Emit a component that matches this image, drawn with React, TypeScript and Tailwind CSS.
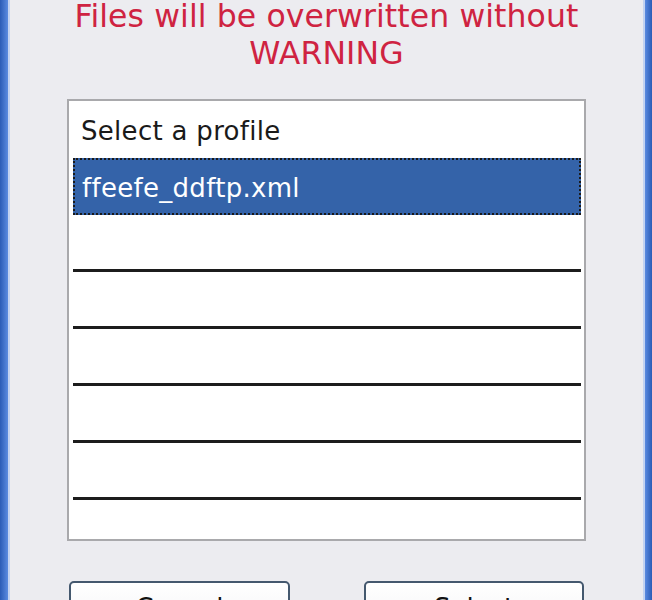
import React from "react";

export default function App() {
  const font = { fontFamily: '"DejaVu Sans", Verdana, sans-serif' };
  return (
    <div
      className="w-[652px] h-[600px] overflow-hidden flex bg-[#ececf0]"
      style={font}
    >
      {/* left window frame */}
      <div className="w-[8px] h-full shrink-0 bg-gradient-to-r from-[#2a5bb6] to-[#5b8be0]" />
      <div className="w-[2px] h-full shrink-0 bg-[#c3d3f1]" />

      {/* client area */}
      <div className="flex-1 flex flex-col items-center">
        <div className="shrink-0 mt-[-2px] text-center text-[31.5px] leading-[37px] text-[#cf2341] tracking-[0.1px]">
          <div>Files will be overwritten without</div>
          <div>WARNING</div>
        </div>

        <div className="shrink-0 mt-[27px] w-[519px] h-[442px] border-2 border-[#a9a9ac] bg-white pl-[4px] pr-[3px] flex flex-col">
          <div className="h-[57px] shrink-0 pl-[8px] pt-[2px] text-[26px] leading-[57px] text-[#1a1a1a] tracking-[0.3px]">
            Select a profile
          </div>
          <div className="h-[57px] shrink-0 bg-[#3463a9] border-2 border-dotted border-[#1a1a1a] pl-[7px] text-[26px] leading-[53px] text-white tracking-[0.3px]">
            <div className="pt-[2px]">ffeefe_ddftp.xml</div>
          </div>
          {[0, 1, 2, 3, 4].map((i) => (
            <div
              key={i}
              className="h-[57px] shrink-0 border-b-[3px] border-[#1c1c1c]"
            />
          ))}
        </div>

        <div className="shrink-0 mt-[40px] flex gap-[74px]">
          <button className="w-[221px] h-[60px] shrink-0 rounded-[5px] border-2 border-[#44586e] bg-gradient-to-b from-white to-[#f1f1f4] text-[26px] leading-[30px] text-[#111] flex justify-center pt-[10px]">
            Cancel
          </button>
          <button className="w-[220px] h-[60px] shrink-0 rounded-[5px] border-2 border-[#44586e] bg-gradient-to-b from-white to-[#f1f1f4] text-[26px] leading-[30px] text-[#111] flex justify-center pt-[10px]">
            Select
          </button>
        </div>
      </div>

      {/* right window frame */}
      <div className="w-[2px] h-full shrink-0 bg-[#c3d3f1]" />
      <div className="w-[7px] h-full shrink-0 bg-gradient-to-l from-[#2a5bb6] to-[#5b8be0]" />
    </div>
  );
}
